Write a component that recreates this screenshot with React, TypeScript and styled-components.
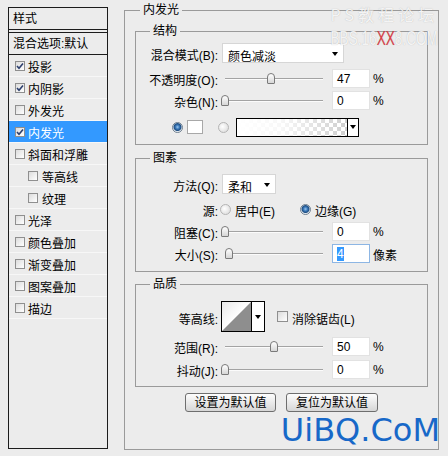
import React from "react";
import styled, { createGlobalStyle } from "styled-components";

const Global = createGlobalStyle`
  html, body { margin: 0; padding: 0; background: #ececec; }
  body {
    font-family: "Liberation Sans", "Noto Sans CJK SC", sans-serif;
    font-size: 12px;
    color: #000;
  }
  * { box-sizing: border-box; }
`;

const Page = styled.div`
  display: flex;
  align-items: flex-start;
  width: 448px;
  height: 456px;
  background: #ececec;
  overflow: hidden;
`;

/* ---------- left style list ---------- */
const StylePanel = styled.div`
  margin: 7px 0 0 8px;
  width: 100px;
  height: 442px;
  border: 1px solid #1c1c1c;
  display: flex;
  flex-direction: column;
  flex-shrink: 0;
`;

const PanelHeader = styled.div`
  height: 22px;
  border-bottom: 1px solid #1c1c1c;
  padding: 1px 0 0 4px;
  line-height: 20px;
`;

const BlendRow = styled.div`
  margin-top: 2px;
  height: 23px;
  border-top: 1px solid #1c1c1c;
  border-bottom: 1px solid #1c1c1c;
  padding: 1px 0 0 4px;
  line-height: 20px;
  white-space: nowrap;
`;

const ListRow = styled.div<{ $active?: boolean; $indent?: boolean }>`
  display: flex;
  align-items: center;
  gap: ${(p) => (p.$indent ? 4 : 3)}px;
  height: 22px;
  padding: 1px 0 0 ${(p) => (p.$indent ? 19 : 6)}px;
  border-bottom: 1px solid #f7f7f7;
  background: ${(p) => (p.$active ? "#3399ff" : "transparent")};
  color: ${(p) => (p.$active ? "#fff" : "#000")};
  white-space: nowrap;
`;

const CheckBox = styled.span<{ $size?: number }>`
  display: inline-flex;
  align-items: center;
  justify-content: center;
  width: ${(p) => p.$size ?? 10}px;
  height: ${(p) => p.$size ?? 10}px;
  border: 1px solid #8f8f8f;
  background: linear-gradient(135deg, #dcdcdc, #ffffff);
  flex-shrink: 0;
`;

const Check = () => (
  <svg width="8" height="8" viewBox="0 0 8 8">
    <path d="M1 4 L3 6.2 L7 1.5" fill="none" stroke="#2c3f6e" strokeWidth="1.6" />
  </svg>
);

/* ---------- right side ---------- */
const OuterGroup = styled.div`
  position: relative;
  margin: 10px 0 0 16px;
  width: 315px;
  height: 440px;
  border: 1px solid #9a9a9a;
  padding: 20px 10px 0 10px;
  display: flex;
  flex-direction: column;
  flex-shrink: 0;
`;

const Group = styled.div<{ $h: number; $mt: number; $pt: number }>`
  position: relative;
  margin-top: ${(p) => p.$mt}px;
  height: ${(p) => p.$h}px;
  border: 1px solid #9a9a9a;
  padding-top: ${(p) => p.$pt}px;
  display: flex;
  flex-direction: column;
`;

const Legend = styled.span<{ $left: number }>`
  position: absolute;
  top: -9px;
  left: ${(p) => p.$left}px;
  padding: 0 3px;
  background: #ececec;
  line-height: 16px;
`;

const Row = styled.div<{ $mt?: number; $h?: number; $pl?: number }>`
  display: flex;
  align-items: center;
  height: ${(p) => p.$h ?? 20}px;
  margin-top: ${(p) => p.$mt ?? 0}px;
  padding-left: ${(p) => p.$pl ?? 0}px;
  white-space: nowrap;
`;

const Label = styled.span<{ $gap?: number }>`
  width: 82px;
  text-align: right;
  margin-right: ${(p) => p.$gap ?? 4}px;
  padding-top: 3px;
  flex-shrink: 0;
`;

const Select = styled.div<{ $w: number }>`
  display: flex;
  align-items: center;
  justify-content: space-between;
  width: ${(p) => p.$w}px;
  height: 20px;
  background: #fff;
  border: 1px solid #d6d6d6;
  padding: 2px 5px 0 5px;
`;

const Caret = styled.span`
  width: 0;
  height: 0;
  border-left: 3.5px solid transparent;
  border-right: 3.5px solid transparent;
  border-top: 4px solid #000;
`;

const SliderBox = styled.div`
  position: relative;
  width: 104px;
  height: 20px;
  flex-shrink: 0;
  background:
    linear-gradient(#a3a3a3, #a3a3a3) no-repeat 3px 10px / 98px 1px,
    linear-gradient(#fbfbfb, #fbfbfb) no-repeat 3px 11px / 98px 1px;
`;

const Thumb = styled.div`
  position: absolute;
  top: 5px;
  width: 8px;
  height: 11px;
  border: 1px solid #7a7a7a;
  border-radius: 4px 4px 1px 1px;
  background: linear-gradient(#ffffff, #d6d6d6);
`;

const NumBox = styled.div<{ $focus?: boolean }>`
  width: 38px;
  height: 19px;
  margin-left: 6px;
  background: #fff;
  border: 1px solid ${(p) => (p.$focus ? "#8db6e4" : "#e2e2e2")};
  padding: 1px 0 0 4px;
  line-height: 16px;
`;

const Selected = styled.span`
  background: #3399ff;
  color: #fff;
`;

const Unit = styled.span`
  margin-left: 3px;
  padding-top: 2px;
`;

const Radio = styled.span<{ $on?: boolean; $ml?: number }>`
  display: inline-block;
  width: 11px;
  height: 11px;
  border-radius: 50%;
  margin-left: ${(p) => p.$ml ?? 0}px;
  border: 1px solid ${(p) => (p.$on ? "#6f7f8f" : "#b4b4b4")};
  background: ${(p) =>
    p.$on
      ? "radial-gradient(circle at 50% 45%, #9cc8f0 0, #3a78b8 2px, #1f4e82 3.5px, #e8eef4 4.5px, #ffffff 6px)"
      : "radial-gradient(circle at 40% 40%, #ffffff 0, #e4e4e4 5px)"};
  flex-shrink: 0;
`;

const Swatch = styled.span`
  width: 16px;
  height: 14px;
  margin-left: 4px;
  background: #fff;
  border: 1px solid #a8a8a8;
`;

const GradientBox = styled.div`
  display: flex;
  width: 123px;
  height: 19px;
  margin-left: 7px;
  border: 1px solid #000;
  background: #fff;
`;

const GradientFill = styled.div`
  flex: 1;
  border-right: 1px solid #000;
  background:
    linear-gradient(to right, #ffffff 0%, rgba(255, 255, 255, 0.85) 40%, rgba(255, 255, 255, 0) 100%),
    repeating-conic-gradient(#cfcfcf 0 25%, #ffffff 0 50%) 0 0 / 8px 8px;
`;

const ArrowCell = styled.div<{ $w: number }>`
  width: ${(p) => p.$w}px;
  display: flex;
  align-items: center;
  justify-content: center;
  background: #fff;
`;

const Option = styled.span<{ $ml?: number }>`
  display: inline-flex;
  align-items: center;
  gap: 4px;
  margin-left: ${(p) => p.$ml ?? 0}px;
`;

const OptionText = styled.span`
  padding-top: 3px;
`;

const ContourBox = styled.div`
  display: flex;
  width: 44px;
  height: 31px;
  margin-left: -1px;
  border: 1px solid #000;
  background: #fff;
`;

const ContourPreview = styled.div`
  width: 30px;
  border-right: 1px solid #000;
  display: flex;
`;

const Buttons = styled.div`
  display: flex;
  justify-content: center;
  gap: 10px;
  margin-top: 6px;
`;

const Button = styled.button<{ $w: number }>`
  width: ${(p) => p.$w}px;
  height: 19px;
  padding: 1px 0 0 0;
  border: 1px solid #6e6e6e;
  border-radius: 3px;
  background: linear-gradient(#fdfdfd, #e6e6e6 60%, #d6d6d6);
  font-family: "Liberation Sans", "Noto Sans CJK SC", sans-serif;
  font-size: 12px;
  line-height: 15px;
  color: #000;
`;

const WatermarkTop = styled.div`
  position: absolute;
  right: 0;
  top: -9px;
  display: flex;
  flex-direction: column;
  align-items: flex-end;
  gap: 1px;
  pointer-events: none;
`;

const WmCn = styled.span`
  display: block;
  font-family: "Noto Sans CJK SC", sans-serif;
  font-size: 16px;
  line-height: 24px;
  height: 24px;
  letter-spacing: 4px;
  color: rgba(255, 255, 255, 0.85);
  text-shadow: 0 0 1px rgba(110, 110, 110, 0.45);
`;

const WmEn = styled.span`
  display: block;
  font-family: "Liberation Sans", sans-serif;
  font-size: 20px;
  line-height: 23px;
  height: 23px;
  transform: scaleX(0.68);
  transform-origin: right center;
  color: rgba(255, 255, 255, 0.85);
  text-shadow: 0 0 1px rgba(110, 110, 110, 0.45);
  white-space: nowrap;
`;

const WmRed = styled.span`
  color: rgba(228, 40, 50, 0.85);
`;

const UiBQ = styled.div`
  position: absolute;
  right: -2px;
  top: 403px;
  font-family: "DejaVu Sans", Verdana, sans-serif;
  font-size: 32px;
  line-height: 32px;
  color: #1768c8;
  pointer-events: none;
  white-space: nowrap;
`;

const Slider = ({ pos }: { pos: number }) => (
  <SliderBox>
    <Thumb style={{ left: `${3 + pos * 0.97 - 4}px` }} />
  </SliderBox>
);

const listItems: { name: string; checked?: boolean; active?: boolean; indent?: boolean }[] = [
  { name: "投影", checked: true },
  { name: "内阴影", checked: true },
  { name: "外发光" },
  { name: "内发光", checked: true, active: true },
  { name: "斜面和浮雕" },
  { name: "等高线", indent: true },
  { name: "纹理", indent: true },
  { name: "光泽" },
  { name: "颜色叠加" },
  { name: "渐变叠加" },
  { name: "图案叠加" },
  { name: "描边" },
];

export default function App() {
  return (
    <>
      <Global />
      <Page>
        <StylePanel>
          <PanelHeader>样式</PanelHeader>
          <BlendRow>混合选项:默认</BlendRow>
          {listItems.map((it) => (
            <ListRow key={it.name} $active={it.active} $indent={it.indent}>
              <CheckBox>{it.checked && <Check />}</CheckBox>
              <span>{it.name}</span>
            </ListRow>
          ))}
        </StylePanel>

        <OuterGroup>
          <Legend $left={15}>内发光</Legend>

          <Group $h={114} $mt={0} $pt={11}>
            <Legend $left={14}>结构</Legend>
            <Row>
              <Label>混合模式(B):</Label>
              <Select $w={122}>
                <OptionText>颜色减淡</OptionText>
                <Caret />
              </Select>
            </Row>
            <Row $mt={5}>
              <Label>不透明度(O):</Label>
              <Slider pos={47} />
              <NumBox>47</NumBox>
              <Unit>%</Unit>
            </Row>
            <Row $mt={2}>
              <Label>杂色(N):</Label>
              <Slider pos={0} />
              <NumBox>0</NumBox>
              <Unit>%</Unit>
            </Row>
            <Row $mt={7} $pl={36}>
              <Radio $on />
              <Swatch />
              <Radio $ml={15} />
              <GradientBox>
                <GradientFill />
                <ArrowCell $w={10}>
                  <Caret />
                </ArrowCell>
              </GradientBox>
            </Row>
          </Group>

          <Group $h={114} $mt={13} $pt={15}>
            <Legend $left={14}>图素</Legend>
            <Row>
              <Label>方法(Q):</Label>
              <Select $w={54}>
                <OptionText>柔和</OptionText>
                <Caret />
              </Select>
            </Row>
            <Row $mt={5}>
              <Label $gap={2}>源:</Label>
              <Option>
                <Radio />
                <OptionText>居中(E)</OptionText>
              </Option>
              <Option $ml={25}>
                <Radio $on />
                <OptionText>边缘(G)</OptionText>
              </Option>
            </Row>
            <Row $mt={2}>
              <Label>阻塞(C):</Label>
              <Slider pos={0} />
              <NumBox>0</NumBox>
              <Unit>%</Unit>
            </Row>
            <Row $mt={2}>
              <Label>大小(S):</Label>
              <Slider pos={4} />
              <NumBox $focus>
                <Selected>4</Selected>
              </NumBox>
              <Unit>像素</Unit>
            </Row>
          </Group>

          <Group $h={103} $mt={12} $pt={16}>
            <Legend $left={14}>品质</Legend>
            <Row $h={31}>
              <Label>等高线:</Label>
              <ContourBox>
                <ContourPreview>
                  <svg width="29" height="29" viewBox="0 0 29 29">
                    <defs>
                      <linearGradient id="cg" x1="0" y1="0" x2="1" y2="1">
                        <stop offset="0" stopColor="#e8e8e8" />
                        <stop offset="0.5" stopColor="#ffffff" />
                      </linearGradient>
                    </defs>
                    <rect x="0" y="0" width="29" height="29" fill="url(#cg)" />
                    <polygon points="0,29 29,0 29,29" fill="#8e8e8e" />
                  </svg>
                </ContourPreview>
                <ArrowCell $w={12}>
                  <Caret />
                </ArrowCell>
              </ContourBox>
              <Option $ml={12}>
                <CheckBox $size={11} />
                <OptionText>消除锯齿(L)</OptionText>
              </Option>
            </Row>
            <Row $mt={4}>
              <Label>范围(R):</Label>
              <Slider pos={50} />
              <NumBox>50</NumBox>
              <Unit>%</Unit>
            </Row>
            <Row $mt={3}>
              <Label>抖动(J):</Label>
              <Slider pos={0} />
              <NumBox>0</NumBox>
              <Unit>%</Unit>
            </Row>
          </Group>

          <Buttons>
            <Button $w={91}>设置为默认值</Button>
            <Button $w={92}>复位为默认值</Button>
          </Buttons>

          <WatermarkTop>
            <WmCn>PS教程论坛</WmCn>
            <WmEn>
              BBS.16<WmRed>XX</WmRed>8.COM
            </WmEn>
          </WatermarkTop>
          <UiBQ>UiBQ.CoM</UiBQ>
        </OuterGroup>
      </Page>
    </>
  );
}
